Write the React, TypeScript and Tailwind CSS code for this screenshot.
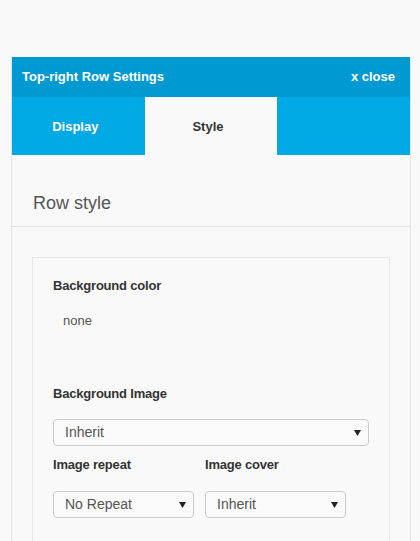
import React from 'react';

function FakeSelect({ value, className = '' }: { value: string; className?: string }) {
  return (
    <div
      className={`h-[27px] flex items-center justify-between pl-[11px] pr-[7px] border border-[#cccccc] rounded-[4px] bg-[#fafafa] text-[14px] text-[#555555] ${className}`}
    >
      <span>{value}</span>
      <svg width="7" height="6" viewBox="0 0 7 6" className="mt-[1px]">
        <path d="M0 0 H7 L3.5 6 Z" fill="#222222" />
      </svg>
    </div>
  );
}

export default function App() {
  return (
    <div
      className="min-h-[541px] bg-[#f9f9f9] pt-[57px] pl-[11px] pr-[9px]"
      style={{ fontFamily: '"Liberation Sans", Arial, sans-serif' }}
    >
      <div className="w-[400px] border-x border-[#e3e3e3] min-h-[484px] bg-[#f9f9f9]">
        <div className="h-[40px] bg-[#0099d1] flex items-center justify-between pl-[10px] pr-[15px] text-white font-bold text-[13px]">
          <span>Top-right Row Settings</span>
          <span>x close</span>
        </div>
        <div className="grid grid-cols-3 h-[58px] text-[13px] font-bold">
          <div className="bg-[#00a8e4] text-white flex items-center justify-center pt-[1px] pr-[6px]">Display</div>
          <div className="bg-[#f9f9f9] text-[#333333] flex items-center justify-center pt-[1px] pr-[6px]">Style</div>
          <div className="bg-[#00a8e4]"></div>
        </div>
        <div className="h-[72px] flex items-end pl-[21px] pb-[11px] border-b border-[#e3e3e3]">
          <h2 className="text-[18px] leading-[24px] text-[#555555] font-normal">Row style</h2>
        </div>
        <div className="pt-[30px] px-[20px]">
          <div className="border border-[#e6e6e6] pt-[19px] px-[20px] pb-[24px] min-h-[260px]">
            <div className="text-[13px] leading-[18px] font-bold text-[#333333] tracking-[-0.2px]">Background color</div>
            <div className="pl-[10px] mt-[17px] text-[13px] leading-[18px] text-[#555555]">none</div>
            <div className="mt-[55px] text-[13px] leading-[18px] font-bold text-[#333333] tracking-[-0.2px]">Background Image</div>
            <FakeSelect value="Inherit" className="mt-[16px]" />
            <div className="flex gap-[11px] mt-[10px]">
              <div className="w-[141px]">
                <div className="text-[13px] leading-[18px] font-bold text-[#333333] tracking-[-0.2px]">Image repeat</div>
                <FakeSelect value="No Repeat" className="mt-[17px]" />
              </div>
              <div className="w-[141px]">
                <div className="text-[13px] leading-[18px] font-bold text-[#333333] tracking-[-0.2px]">Image cover</div>
                <FakeSelect value="Inherit" className="mt-[17px]" />
              </div>
            </div>
          </div>
        </div>
      </div>
    </div>
  );
}
